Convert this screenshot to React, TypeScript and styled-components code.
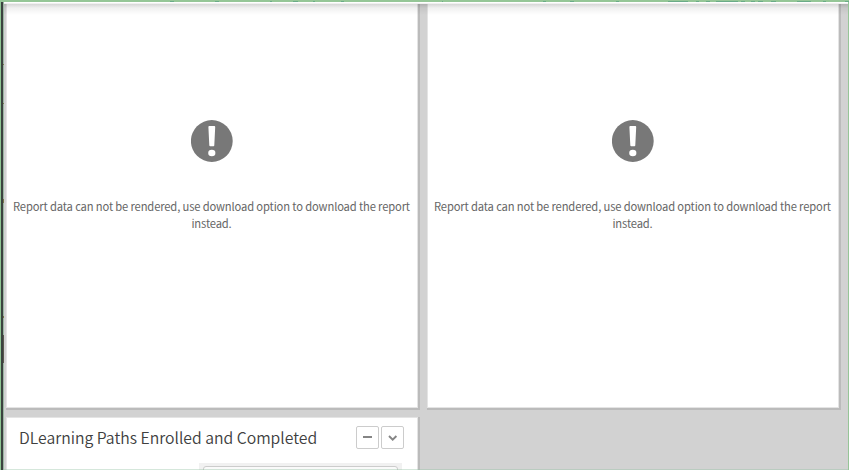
import React from 'react';
import styled, { createGlobalStyle } from 'styled-components';

const PageStyle = createGlobalStyle`
  * { box-sizing: border-box; }
  body { margin: 0; overflow: hidden; }
`;

const Screen = styled.div`
  position: relative;
  display: grid;
  grid-template-columns: 4px 844px 1px;
  grid-template-rows: 2px 468px;
  width: 849px;
  height: 470px;
  overflow: hidden;
  background: #d2d2d2;
  font-family: 'Noto Sans CJK SC', 'Noto Sans', sans-serif;
`;

const TopEdge = styled.div`
  grid-column: 1 / -1;
  height: 2px;
  background: #95c697;
  svg { display: block; }
`;

const LeftEdge = styled.div`
  background: linear-gradient(90deg, #8fc593 0 1px, #3b423f 1px 3px, #9cb5a3 3px 4px);
  svg { display: block; }
`;

const RightEdge = styled.div`
  background: #96c597;
`;

const Viewport = styled.main`
  position: relative;
  height: 468px;
  overflow: hidden;
  padding: 1px 0 0 2px;
`;

const TopShade = styled.div`
  position: absolute;
  inset: 0 0 auto 0;
  height: 13px;
  background: linear-gradient(180deg, #fff 0 1px, #f0f0f0 1px 2px, rgba(0, 0, 0, 0.16) 2px, rgba(0, 0, 0, 0.06) 6px, transparent 13px);
`;

const BottomLine = styled.div`
  position: absolute;
  inset: auto 0 0 0;
  height: 1px;
  background: rgba(150, 195, 165, 0.4);
`;

const Dashboard = styled.div`
  display: grid;
  grid-template-columns: 412px 412px;
  grid-template-rows: 405px 60px;
  column-gap: 9px;
  row-gap: 9px;
`;

const Card = styled.section`
  background: #fff;
  border: 1px solid #e4e4e4;
  box-shadow: 1px 1px 0 1px #bbb;
  clip-path: inset(0 -2px -2px 0);
`;

const ReportCard = styled(Card)`
  display: flex;
  flex-direction: column;
  align-items: center;
  padding-top: 117px;
  border-top: 0;
`;

const Message = styled.p`
  width: 410px;
  margin: 36px 0 0;
  padding-right: 1px;
  color: #666;
  font-size: 11.2px;
  letter-spacing: -0.14px;
  line-height: 17.4px;
  text-align: center;
`;

const PathsCard = styled(Card)`
  display: flex;
  flex-direction: column;
  height: 60px;
`;

const CardHeader = styled.header`
  display: flex;
  justify-content: space-between;
  align-items: flex-start;
  padding: 8px 13px 0 12px;
`;

const Title = styled.h2`
  margin: 0;
  color: #404040;
  font-size: 15.75px;
  font-weight: 350;
  line-height: 24px;
  white-space: nowrap;
`;

const Actions = styled.div`
  display: flex;
  gap: 2px;
`;

const ActionButton = styled.button`
  display: grid;
  place-items: center;
  width: 23px;
  height: 23px;
  padding: 0;
  background: #fff;
  border: 1px solid #ccc;
  border-radius: 2px;
  svg { display: block; }
`;

const FilterTray = styled.div`
  flex: none;
  align-self: flex-end;
  width: 203px;
  height: 13px;
  margin: 13px 15px 0 0;
  padding: 3px 4px 0;
  background: #f1f1f1;
`;

const FilterField = styled.div`
  height: 20px;
  background: #fafafa;
  border: 1px solid #ccc;
  border-radius: 3px;
`;

const marks = [
  [170, 4], [215, 4], [270, 2], [293, 3], [296, 2], [313, 2], [341, 3],
  [442, 1], [543, 3], [570, 4], [616, 3], [668, 20], [696, 3], [706, 4],
  [716, 22], [741, 4], [751, 4], [758, 5], [771, 5], [797, 14], [823, 3], [845, 4],
];

const AlertIcon = () => (
  <svg width="42" height="42" viewBox="0 0 42 42" aria-hidden="true">
    <circle cx="20.8" cy="21" r="20.9" fill="#787878" />
    <path d="M17.4 7q0-.9.8-.9h5.2q.8 0 .8.9l-.9 18.3q0 1-.9 1h-3.2q-.9 0-.9-1Z" fill="#fff" />
    <ellipse cx="20.8" cy="33" rx="3.6" ry="3.3" fill="#fff" />
  </svg>
);

const Report = () => (
  <ReportCard>
    <AlertIcon />
    <Message>Report data can not be rendered, use download option to download the report instead.</Message>
  </ReportCard>
);

export default function App() {
  return (
    <>
      <PageStyle />
      <Screen>
        <TopEdge>
          <svg width="849" height="2">
            {marks.map(([x, w]) => (
              <rect key={x} x={x} y="1" width={w} height="1" fill="#6aab88" />
            ))}
          </svg>
        </TopEdge>
        <LeftEdge>
          <svg width="4" height="468">
            <path d="M3 62h1v1H3zM3 101h1v1H3zM3 197h1v4H3zM3 314h1v2H3z" fill="#75744a" />
            <path d="M3 333h1v28H3z" fill="#59564e" />
          </svg>
        </LeftEdge>
        <Viewport>
          <Dashboard>
            <Report />
            <Report />
            <PathsCard>
              <CardHeader>
                <Title>DLearning Paths Enrolled and Completed</Title>
                <Actions>
                  <ActionButton aria-label="Minimize">
                    <svg width="11" height="11"><path d="M1 5h9" stroke="#858585" strokeWidth="2" /></svg>
                  </ActionButton>
                  <ActionButton aria-label="Options">
                    <svg width="11" height="11"><path d="M2 4l3.7 3.7L9.4 4" fill="none" stroke="#858585" strokeWidth="1.9" /></svg>
                  </ActionButton>
                </Actions>
              </CardHeader>
              <FilterTray><FilterField /></FilterTray>
            </PathsCard>
          </Dashboard>
          <TopShade />
          <BottomLine />
        </Viewport>
        <RightEdge />
      </Screen>
    </>
  );
}
